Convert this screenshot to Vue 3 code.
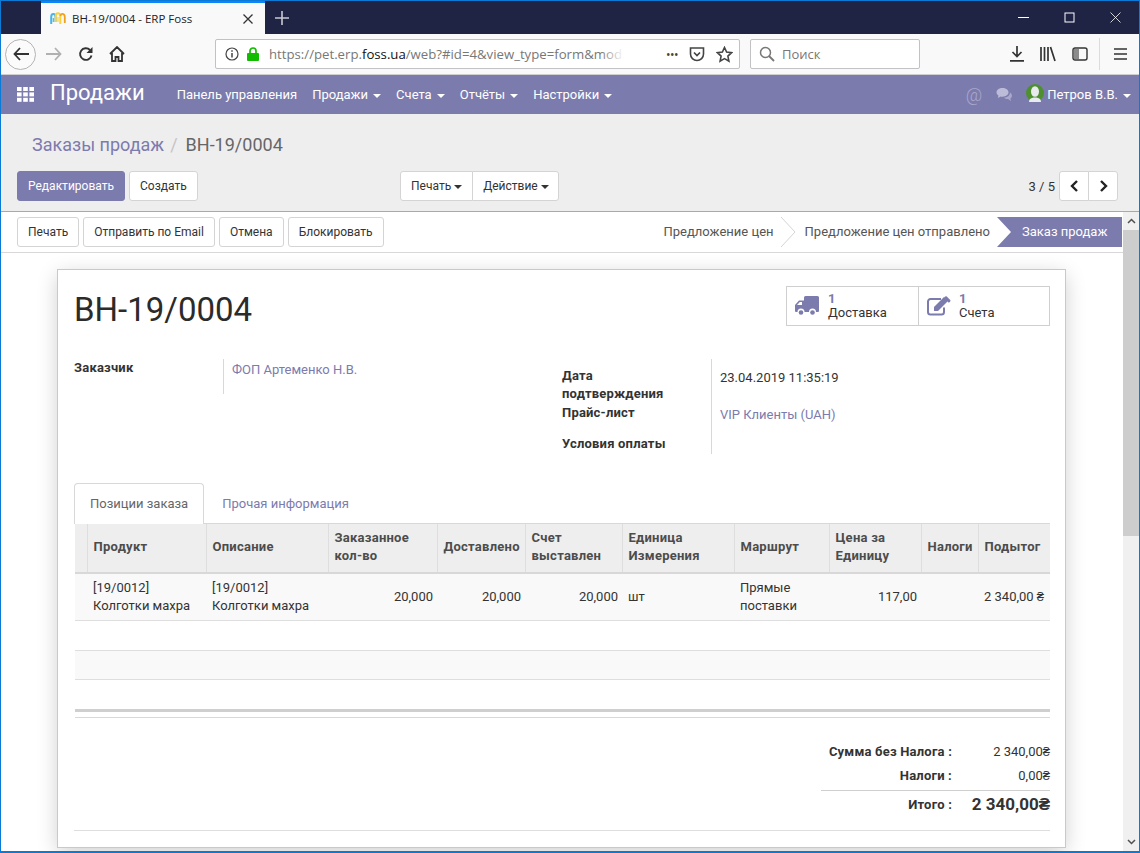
<template>
  <div class="window">
    <!-- Browser chrome -->
    <div class="tabbar">
      <div class="tab">
        <svg class="favicon" width="16" height="16" viewBox="0 0 16 16">
          <path d="M1.200 13V6c0-4 4.300-4 4.300 0v5" fill="none" stroke="#45b5ec" stroke-width="2" />
          <path d="M3.300 7v4" stroke="#45b5ec" stroke-width="1.200" />
          <path d="M5.700 11V5c0-3.600 4.600-3.600 4.600 0v8" fill="none" stroke="#fbd13a" stroke-width="2" />
          <path d="M8 6v5" stroke="#fbd13a" stroke-width="1.200" />
          <path d="M10.500 5c0-3 4.300-3 4.300 1v6" fill="none" stroke="#f0a020" stroke-width="1.800" />
        </svg>
        <span class="tab-title">ВН-19/0004 - ERP Foss</span>
        <svg class="tab-close" width="10" height="10" viewBox="0 0 10 10">
          <path d="M0.500 0.500l9 9M9.500 0.500l-9 9" stroke="#333" stroke-width="1.300" />
        </svg>
      </div>
      <svg class="new-tab" width="14" height="14" viewBox="0 0 14 14">
        <path d="M7 0v14M0 7h14" stroke="#c9cad4" stroke-width="1.600" />
      </svg>
      <div class="window-controls">
        <svg width="11" height="11" viewBox="0 0 11 11"><path d="M0 5.500h11" stroke="#fff" /></svg>
        <svg width="11" height="11" viewBox="0 0 11 11"><rect x="1" y="1" width="9" height="9" fill="none" stroke="#fff" /></svg>
        <svg width="11" height="11" viewBox="0 0 11 11"><path d="M0.500 0.500l10 10M10.500 0.500l-10 10" stroke="#fff" stroke-width="0.800" /></svg>
      </div>
    </div>

    <div class="toolbar">
      <div class="back-btn">
        <svg width="16" height="14" viewBox="0 0 16 14"><path d="M7 1L1.500 7 7 13M2 7h14" fill="none" stroke="#333" stroke-width="1.800" /></svg>
      </div>
      <svg class="nav-icon" width="16" height="14" viewBox="0 0 16 14"><path d="M9 1l5.500 6L9 13M14 7H0" fill="none" stroke="#b1b1b3" stroke-width="1.800" /></svg>
      <svg class="nav-icon reload" width="16" height="16" viewBox="0 0 16 16"><path d="M13.500 9.500A5.800 5.800 0 1 1 12 4" fill="none" stroke="#333" stroke-width="1.900" /><path d="M14.500 1v6h-6z" fill="#333" /></svg>
      <svg class="nav-icon home" width="16" height="16" viewBox="0 0 16 16"><path d="M1 8l7-7 7 7M3 7v8h3.500v-4h3v4H13V7" fill="none" stroke="#333" stroke-width="1.800" /></svg>

      <div class="urlbar">
        <svg width="14" height="14" viewBox="0 0 14 14"><circle cx="7" cy="7" r="6" fill="none" stroke="#444" stroke-width="1.200" /><path d="M7 6v4.500M7 3.200v1.600" stroke="#444" stroke-width="1.500" /></svg>
        <svg class="lock" width="12" height="14" viewBox="0 0 12 14"><path d="M3 6V4a3 3 0 0 1 6 0v2" fill="none" stroke="#12bc00" stroke-width="1.700" /><rect y="6" width="12" height="8" rx="1" fill="#12bc00" /></svg>
        <span class="url"><span class="url-dim">https://pet.erp.</span>foss.ua<span class="url-dim">/web?#id=4&amp;view_type=form&amp;mod</span></span>
        <span class="url-fade"></span>
        <span class="dots">•••</span>
        <svg width="16" height="16" viewBox="0 0 16 16"><path d="M1.500 2h13v6a6.500 6.500 0 0 1-13 0z" fill="none" stroke="#444" stroke-width="1.600" /><path d="M5 6.500l3 3 3-3" fill="none" stroke="#444" stroke-width="1.700" /></svg>
        <svg width="17" height="17" viewBox="0 0 17 17"><path d="M8.500 1.500l2.100 4.600 5 .6-3.700 3.400 1 5-4.400-2.500-4.400 2.500 1-5L1.400 6.700l5-.6z" fill="none" stroke="#444" stroke-width="1.600" /></svg>
      </div>

      <div class="searchbar">
        <svg width="16" height="16" viewBox="0 0 16 16"><circle cx="6.500" cy="6.500" r="5" fill="none" stroke="#777" stroke-width="1.500" /><path d="M10 10l5 5" stroke="#777" stroke-width="1.800" /></svg>
        <span>Поиск</span>
      </div>

      <div class="toolbar-right">
        <svg width="14" height="16" viewBox="0 0 14 16"><path d="M7 0v10M2.500 6L7 10.500 11.500 6M0 14.800h14" fill="none" stroke="#333" stroke-width="1.700" /></svg>
        <svg width="16" height="16" viewBox="0 0 16 16"><path d="M1 1v14M4.500 1v14M8 1v14M10.500 1l4.500 14" fill="none" stroke="#333" stroke-width="1.700" /></svg>
        <svg width="16" height="14" viewBox="0 0 16 14"><rect x="1" y="1" width="14" height="12" rx="2" fill="none" stroke="#333" stroke-width="1.400" /><rect x="2" y="2" width="5" height="10" fill="#333" opacity="0.550" /></svg>
        <span class="toolbar-sep"></span>
        <svg width="13" height="12" viewBox="0 0 13 12"><path d="M0 1h13M0 6h13M0 11h13" stroke="#333" stroke-width="1.600" /></svg>
      </div>
    </div>

    <!-- Main navbar -->
    <nav class="navbar">
      <svg class="apps" width="17" height="15" viewBox="0 0 17 15">
        <g fill="#fff">
          <rect v-for="c in appsGrid" :key="c.x + '-' + c.y" :x="c.x" :y="c.y" width="4.600" height="4" />
        </g>
      </svg>
      <span class="brand">Продажи</span>
      <ul class="menu">
        <li v-for="m in menu" :key="m.label">{{ m.label }}<i v-if="m.caret" class="caret"></i></li>
      </ul>
      <div class="nav-right">
        <span class="at">@</span>
        <svg width="18" height="15" viewBox="0 0 18 15"><path d="M6.500 1C3 1 0.500 3 0.500 5.300c0 1.400.9 2.500 2 3.300L1.800 11l2.800-1.500c.6.100 1.300.2 1.900.2 3.300 0 6-2 6-4.400S9.800 1 6.500 1z" fill="#bdbcd8" /><path d="M14 5.500c0 3-2.800 5-6 5.200 1 1 2.400 1.500 4 1.400L15 14l-.6-2.500c1.700-1 2.600-3.800-.4-6z" fill="#a9a8cb" /></svg>
        <span class="avatar">
          <svg width="18" height="18" viewBox="0 0 18 18"><circle cx="9" cy="9" r="9" fill="#4e9030" /><ellipse cx="9" cy="7.500" rx="4" ry="5.300" fill="#e9e9f0" /><path d="M3 18c0-3.500 3-4.500 6-4.500s6 1 6 4.500z" fill="#e9e9f0" /></svg>
        </span>
        <span class="user">Петров В.В.<i class="caret"></i></span>
      </div>
    </nav>

    <!-- Control panel -->
    <div class="control-panel">
      <div class="breadcrumb">
        <span class="crumb-link">Заказы продаж</span>
        <span class="crumb-sep">/</span>
        <span>ВН-19/0004</span>
      </div>
      <div class="cp-buttons">
        <div class="cp-left">
          <button class="btn btn-primary">Редактировать</button>
          <button class="btn">Создать</button>
        </div>
        <div class="btn-group dropdowns">
          <button class="btn">Печать<i class="caret dark"></i></button>
          <button class="btn">Действие<i class="caret dark"></i></button>
        </div>
        <div class="pager">
          <span>3 / 5</span>
          <div class="btn-group">
            <button class="btn pager-btn">
              <svg width="9" height="12" viewBox="0 0 9 12"><path d="M7 1L2 6l5 5" fill="none" stroke="#222" stroke-width="2.400" /></svg>
            </button>
            <button class="btn pager-btn">
              <svg width="9" height="12" viewBox="0 0 9 12"><path d="M2 1l5 5-5 5" fill="none" stroke="#222" stroke-width="2.400" /></svg>
            </button>
          </div>
        </div>
      </div>
    </div>

    <div class="body-row">
      <div class="main-col">
        <!-- Status bar -->
        <div class="statusbar">
          <div class="status-actions">
            <button v-for="a in actions" :key="a" class="btn">{{ a }}</button>
          </div>
          <div class="status-steps">
            <span class="step">Предложение цен</span>
            <svg class="step-arrow" width="16" height="30" viewBox="0 0 16 30"><path d="M1 0l14 15L1 30" fill="none" stroke="#d4d4d4" /></svg>
            <span class="step">Предложение цен отправлено</span>
            <span class="step step-active">Заказ продаж</span>
          </div>
        </div>

        <div class="content">
          <div class="sheet">
            <div class="sheet-head">
              <h1>ВН-19/0004</h1>
              <div class="stat-buttons">
                <div class="stat">
                  <svg width="24" height="20" viewBox="0 0 24 20">
                    <path d="M9 1.500A1.500 1.500 0 0 1 10.500 0h12A1.500 1.500 0 0 1 24 1.500V15a1 1 0 0 1-1 1h-2a3.500 3.500 0 0 0-7 0H9.500a3.500 3.500 0 0 0-7 0H1a1 1 0 0 1-1-1V9l4-4.500h5z" fill="#7c7bad" />
                    <path d="M2 9l2.800-3H7v3z" fill="#fff" />
                    <circle cx="6" cy="16.500" r="2.300" fill="#7c7bad" />
                    <circle cx="17.500" cy="16.500" r="2.300" fill="#7c7bad" />
                  </svg>
                  <div class="stat-text"><b>1</b><span>Доставка</span></div>
                </div>
                <div class="stat">
                  <svg width="24" height="20" viewBox="0 0 24 20">
                    <path d="M17 11.500V16a2.500 2.500 0 0 1-2.500 2.500h-11A2.500 2.500 0 0 1 1 16V5.500A2.500 2.500 0 0 1 3.500 3H14" fill="none" stroke="#7c7bad" stroke-width="2" />
                    <path d="M7 11l10-10 4 4-10 10H7z" fill="#7c7bad" />
                    <path d="M18 0.500l1.500-.3 4 4-.4 1.500-1.300 1.100-4.700-4.700z" fill="#7c7bad" />
                  </svg>
                  <div class="stat-text"><b>1</b><span>Счета</span></div>
                </div>
              </div>
            </div>

            <div class="form-groups">
              <div class="group group-left">
                <div class="f-label">Заказчик</div>
                <div class="f-value"><span class="link">ФОП Артеменко Н.В.</span></div>
              </div>
              <div class="group group-right">
                <div class="f-label date-label">Дата подтверждения</div>
                <div class="f-value date-value">23.04.2019 11:35:19</div>
                <div class="f-label price-label">Прайс-лист</div>
                <div class="f-value price-value"><span class="link">VIP Клиенты (UAH)</span></div>
                <div class="f-label terms-label">Условия оплаты</div>
                <div class="f-value terms-value"></div>
              </div>
            </div>

            <div class="tabs">
              <span class="nav-tab active">Позиции заказа</span>
              <span class="nav-tab">Прочая информация</span>
            </div>

            <table class="lines">
              <colgroup>
                <col v-for="(w, i) in colWidths" :key="i" :style="{ width: w + 'px' }" />
              </colgroup>
              <thead>
                <tr>
                  <th></th>
                  <th v-for="c in columns" :key="c">{{ c }}</th>
                </tr>
              </thead>
              <tbody>
                <tr class="row-main">
                  <td></td>
                  <td>[19/0012] Колготки махра</td>
                  <td>[19/0012] Колготки махра</td>
                  <td class="num">20,000</td>
                  <td class="num">20,000</td>
                  <td class="num">20,000</td>
                  <td>шт</td>
                  <td>Прямые поставки</td>
                  <td class="num">117,00</td>
                  <td></td>
                  <td class="subtotal">2 340,00 ₴</td>
                </tr>
                <tr class="row-empty"><td colspan="11"></td></tr>
                <tr class="row-empty grey"><td colspan="11"></td></tr>
                <tr class="row-empty last"><td colspan="11"></td></tr>
              </tbody>
              <tfoot>
                <tr><td colspan="11"></td></tr>
              </tfoot>
            </table>

            <div class="totals">
              <div class="t-row">
                <span class="t-label">Сумма без Налога :</span>
                <span class="t-value">2 340,00₴</span>
              </div>
              <div class="t-row">
                <span class="t-label">Налоги :</span>
                <span class="t-value">0,00₴</span>
              </div>
              <div class="t-row t-total">
                <span class="t-label">Итого :</span>
                <span class="t-value">2 340,00₴</span>
              </div>
            </div>
            <div class="sheet-end"></div>
          </div>
        </div>
      </div>

      <div class="scrollbar">
        <svg width="9" height="6" viewBox="0 0 9 6"><path d="M1 5l3.500-3.500L8 5" fill="none" stroke="#505050" stroke-width="1.500" /></svg>
        <div class="scroll-track"><div class="scroll-thumb"></div></div>
        <svg width="9" height="6" viewBox="0 0 9 6"><path d="M1 1l3.500 3.500L8 1" fill="none" stroke="#505050" stroke-width="1.500" /></svg>
      </div>
    </div>
  </div>
</template>

<script setup>
const appsGrid = []
for (let r = 0; r < 3; r++) {
  for (let c = 0; c < 3; c++) {
    appsGrid.push({ x: c * 6.2, y: r * 5.4 })
  }
}

const menu = [
  { label: 'Панель управления', caret: false },
  { label: 'Продажи', caret: true },
  { label: 'Счета', caret: true },
  { label: 'Отчёты', caret: true },
  { label: 'Настройки', caret: true }
]

const actions = ['Печать', 'Отправить по Email', 'Отмена', 'Блокировать']

const columns = [
  'Продукт',
  'Описание',
  'Заказанное кол-во',
  'Доставлено',
  'Счет выставлен',
  'Единица Измерения',
  'Маршрут',
  'Цена за Единицу',
  'Налоги',
  'Подытог'
]

const colWidths = [12, 119, 122, 109, 88, 97, 112, 95, 92, 57, 72]
</script>

<style>
html,
body {
  margin: 0;
  overflow: hidden;
}
</style>

<style scoped>
.window {
  width: 1140px;
  height: 853px;
  box-sizing: border-box;
  border: 1px solid #0a7ad6;
  border-bottom-width: 2px;
  display: flex;
  flex-direction: column;
  overflow: hidden;
  font-family: Roboto, "Liberation Sans", sans-serif;
  font-size: 13px;
  color: #333;
  background: #fff;
}

/* Browser chrome */
.tabbar {
  height: 33px;
  flex: none;
  background: #1f2344;
  display: flex;
  align-items: center;
  padding-left: 40px;
}

.tab {
  width: 224px;
  height: 33px;
  box-sizing: border-box;
  border-top: 2px solid #0a84ff;
  background: #f9f9fa;
  display: flex;
  align-items: center;
  padding: 0 12px 0 9px;
  font-family: "Open Sans", sans-serif;
  font-size: 11.500px;
  color: #222;
}

.favicon {
  flex: none;
}

.tab-title {
  margin-left: 6px;
  flex: 1;
  white-space: nowrap;
}

.new-tab {
  margin-left: 10px;
}

.window-controls {
  margin-left: auto;
  display: flex;
  gap: 35px;
  padding-right: 18px;
}

.toolbar {
  height: 41px;
  flex: none;
  box-sizing: border-box;
  background: #f9f9fa;
  border-bottom: 1px solid #cfcfd1;
  display: flex;
  align-items: center;
  font-family: "Open Sans", sans-serif;
}

.back-btn {
  width: 31px;
  height: 31px;
  margin-left: 4px;
  flex: none;
  box-sizing: border-box;
  border: 1px solid #b4b4b6;
  border-radius: 50%;
  background: #fbfbfb;
  display: flex;
  align-items: center;
  justify-content: center;
}

.nav-icon {
  flex: none;
  margin-left: 10px;
}

.nav-icon.reload {
  margin-left: 16px;
}

.nav-icon.home {
  margin-left: 15px;
}

.urlbar {
  width: 525px;
  height: 30px;
  margin-left: 90px;
  flex: none;
  box-sizing: border-box;
  border: 1px solid #c2c2c4;
  border-radius: 2px;
  background: #fff;
  display: flex;
  align-items: center;
  padding: 0 6px 0 9px;
  position: relative;
}

.lock {
  margin-left: 8px;
}

.url {
  margin-left: 10px;
  width: 355px;
  overflow: hidden;
  white-space: nowrap;
  font-size: 13.200px;
  color: #111;
}

.url-dim {
  color: #777;
}

.url-fade {
  width: 24px;
  height: 20px;
  margin-left: -24px;
  background: linear-gradient(90deg, rgba(255, 255, 255, 0), #fff);
}

.dots {
  margin-left: auto;
  margin-right: 11px;
  font-size: 12px;
  letter-spacing: -0.500px;
  color: #444;
}

.urlbar svg:last-child {
  margin-left: 11px;
}

.searchbar {
  width: 170px;
  height: 30px;
  margin-left: 10px;
  flex: none;
  box-sizing: border-box;
  border: 1px solid #c2c2c4;
  border-radius: 2px;
  background: #fff;
  display: flex;
  align-items: center;
  gap: 7px;
  padding-left: 8px;
  font-size: 13px;
  color: #777;
}

.toolbar-right {
  margin-left: auto;
  display: flex;
  align-items: center;
  gap: 16px;
  padding-right: 12px;
}

.toolbar-sep {
  width: 1px;
  height: 32px;
  background: #dcdcde;
  margin: 0 -2px 0 -5px;
}

/* Navbar */
.navbar {
  height: 39px;
  flex: none;
  background: #7c7bad;
  color: #fff;
  display: flex;
  align-items: center;
  padding-left: 16px;
}

.apps {
  flex: none;
}

.brand {
  margin-left: 16px;
  font-size: 22px;
  line-height: 1;
  margin-top: -4px;
}

.menu {
  list-style: none;
  margin: 0 0 0 32px;
  padding: 0;
  display: flex;
  gap: 15px;
}

.caret {
  display: inline-block;
  width: 0;
  height: 0;
  margin-left: 5px;
  vertical-align: middle;
  border-top: 4px solid #fff;
  border-left: 4px solid transparent;
  border-right: 4px solid transparent;
}

.caret.dark {
  margin-left: 3px;
  border-top-color: #333;
}

.nav-right {
  margin-left: auto;
  display: flex;
  align-items: center;
  padding-right: 8px;
}

.at {
  font-size: 18px;
  font-weight: 300;
  color: #a9a8cb;
}

.nav-right svg {
  margin-left: 14px;
}

.avatar {
  margin-left: 12px;
  display: flex;
  margin-top: -4px;
}

.avatar svg {
  margin-left: 0;
}

.user {
  margin-left: 3px;
}

/* Control panel */
.control-panel {
  height: 98px;
  flex: none;
  box-sizing: border-box;
  background: #efeeef;
  border-bottom: 1px solid #a9a9a9;
  padding: 18px 21px 0 16px;
}

.breadcrumb {
  height: 24px;
  padding-left: 15px;
  display: flex;
  align-items: center;
  font-size: 18px;
  color: #666;
}

.crumb-link {
  color: #7c7bad;
}

.crumb-sep {
  margin: 0 8px 0 6px;
  color: #c4c4c4;
}

.cp-buttons {
  margin-top: 15px;
  display: flex;
  align-items: flex-start;
}

.cp-left {
  width: 383px;
  display: flex;
  gap: 4px;
}

.btn {
  height: 30px;
  box-sizing: border-box;
  border: 1px solid #d4d4d4;
  border-radius: 3px;
  background: #fff;
  padding: 0 10px;
  font-family: inherit;
  font-size: 12px;
  color: #333;
  white-space: nowrap;
}

.btn-primary {
  background: #7c7bad;
  border-color: #7c7bad;
  color: #fff;
}

.btn-group {
  display: flex;
}

.btn-group .btn:first-child {
  border-radius: 3px 0 0 3px;
}

.btn-group .btn:last-child {
  border-radius: 0 3px 3px 0;
  margin-left: -1px;
}

.dropdowns .btn:last-child {
  padding-right: 9px;
}

.pager {
  margin-left: auto;
  display: flex;
  align-items: center;
  gap: 4px;
}

.pager-btn {
  width: 30px;
  padding: 0;
  display: flex;
  align-items: center;
  justify-content: center;
}

/* Body */
.body-row {
  flex: 1;
  min-height: 0;
  display: flex;
}

.main-col {
  flex: 1;
  min-width: 0;
  display: flex;
  flex-direction: column;
}

.statusbar {
  height: 41px;
  flex: none;
  box-sizing: border-box;
  border-bottom: 1px solid #d9d7d7;
  display: flex;
  align-items: flex-start;
  justify-content: space-between;
  padding: 5px 1px 0 16px;
}

.status-actions {
  display: flex;
  gap: 4px;
}

.status-steps {
  display: flex;
  align-items: center;
  height: 30px;
}

.step {
  line-height: 30px;
  padding-right: 7px;
  color: #555;
}

.step-arrow {
  margin: 0 9px 0 -1px;
}

.step-active {
  margin-left: 0;
  width: 125px;
  box-sizing: border-box;
  padding: 0 0 0 25px;
  background: #7c7bad;
  color: #fff;
  clip-path: polygon(0 0, 100% 0, 100% 100%, 0 100%, 14px 50%);
}

.content {
  flex: 1;
  min-height: 0;
  overflow: hidden;
  padding: 16px 0 0 56px;
  background: #fff;
}

.sheet {
  width: 1009px;
  box-sizing: border-box;
  border: 1px solid #c8c8d3;
  box-shadow: 0 5px 20px -1px rgba(0, 0, 0, 0.2);
  padding: 16px 15px 0 16px;
  background: #fff;
}

.sheet-head {
  display: flex;
  justify-content: space-between;
  align-items: flex-start;
  height: 73px;
}

h1 {
  margin: 4px 0 0;
  font-size: 33px;
  font-weight: 400;
  line-height: 40px;
  color: #2b2b2b;
}

.stat-buttons {
  display: flex;
  border: 1px solid #cfcfcf;
  height: 40px;
  box-sizing: border-box;
}

.stat {
  width: 131px;
  box-sizing: border-box;
  display: flex;
  align-items: center;
  gap: 9px;
  padding-left: 8px;
}

.stat + .stat {
  gap: 8px;
  border-left: 1px solid #cfcfcf;
}

.stat-text {
  display: flex;
  flex-direction: column;
  line-height: 14px;
}

.stat-text b {
  color: #7c7bad;
  font-size: 13px;
}

.form-groups {
  display: flex;
  align-items: flex-start;
}

.group-left {
  width: 488px;
  display: grid;
  grid-template-columns: 149px 1fr;
}

.group-right {
  width: 400px;
  display: grid;
  grid-template-columns: 149px 1fr;
  grid-template-rows: 38px 31px 26px;
}

.f-label {
  font-weight: 700;
  letter-spacing: 0.200px;
  color: #333;
  line-height: 18px;
}

.group-left .f-value {
  height: 35px;
  box-sizing: border-box;
  border-left: 1px solid #d9d7d7;
  padding: 3px 0 0 8px;
}

.date-label {
  padding: 8px 30px 0 0;
}

.price-label {
  padding-top: 7px;
}

.terms-label {
  padding-top: 7px;
}

.group-right .f-value {
  border-left: 1px solid #d9d7d7;
  padding-left: 8px;
}

.date-value {
  padding-top: 11px;
}

.price-value {
  padding-top: 10px;
}

.link {
  color: #7c7bad;
}

.tabs {
  display: flex;
  margin-top: 29px;
  height: 40px;
}

.nav-tab {
  padding: 0 15px;
  margin-right: 3px;
  line-height: 41px;
  color: #7c7bad;
}

.nav-tab.active {
  box-sizing: border-box;
  height: 41px;
  line-height: 40px;
  border: 1px solid #d9d7d7;
  border-bottom: 0;
  border-radius: 4px 4px 0 0;
  background: #fff;
  color: #666;
  position: relative;
  z-index: 1;
}

.lines {
  width: 975px;
  table-layout: fixed;
  border-collapse: collapse;
  margin-left: 1px;
}

.lines th {
  height: 49px;
  box-sizing: border-box;
  padding: 0 4px 2px 6px;
  background: #eeeeee;
  border-top: 1px solid #d9d7d7;
  border-bottom: 2px solid #d9d7d7;
  border-left: 1px solid #dedede;
  text-align: left;
  font-weight: 700;
  letter-spacing: 0.250px;
  line-height: 18px;
  color: #4c4c4c;
}

.lines th:first-child {
  border-left: 0;
}

.row-main td {
  height: 48px;
  box-sizing: border-box;
  padding: 0 4px 0 6px;
  background: #f9f9f9;
  border-bottom: 1px solid #dedede;
  line-height: 18px;
  color: #333;
}

.lines .num {
  text-align: right;
}

.lines .subtotal {
  white-space: nowrap;
  padding-right: 0;
}

.row-empty td {
  height: 30px;
  box-sizing: border-box;
  padding: 0;
  border-bottom: 1px solid #dedede;
}

.row-empty.grey td {
  height: 29px;
  background: #f9f9f9;
}

.row-empty.last td {
  height: 31px;
  border-bottom: 3px solid #cfcfcf;
}

.lines tfoot td {
  height: 5px;
  padding: 0;
  border-bottom: 1px solid #d9d7d7;
}

.totals {
  width: 229px;
  margin: 21px 0 0 auto;
}

.t-row {
  display: flex;
  justify-content: flex-end;
  align-items: center;
  height: 24px;
}

.t-label {
  font-weight: 700;
  letter-spacing: 0.200px;
  color: #333;
}

.t-value {
  width: 98px;
  text-align: right;
  color: #333;
}

.t-total {
  margin-top: 3px;
  height: 27px;
  border-top: 1px solid #cfcfcf;
}

.t-total .t-value {
  font-size: 17px;
  font-weight: 700;
}

.sheet-end {
  margin-top: 12px;
  border-top: 1px solid #dedede;
  height: 16px;
}

/* Scrollbar */
.scrollbar {
  width: 16px;
  flex: none;
  background: #f0f0f0;
  display: flex;
  flex-direction: column;
  align-items: center;
}

.scrollbar svg {
  flex: none;
  margin: 6px 0;
}

.scroll-track {
  flex: 1;
  width: 100%;
}

.scroll-thumb {
  height: 306px;
  background: #cdcdcd;
}
</style>
